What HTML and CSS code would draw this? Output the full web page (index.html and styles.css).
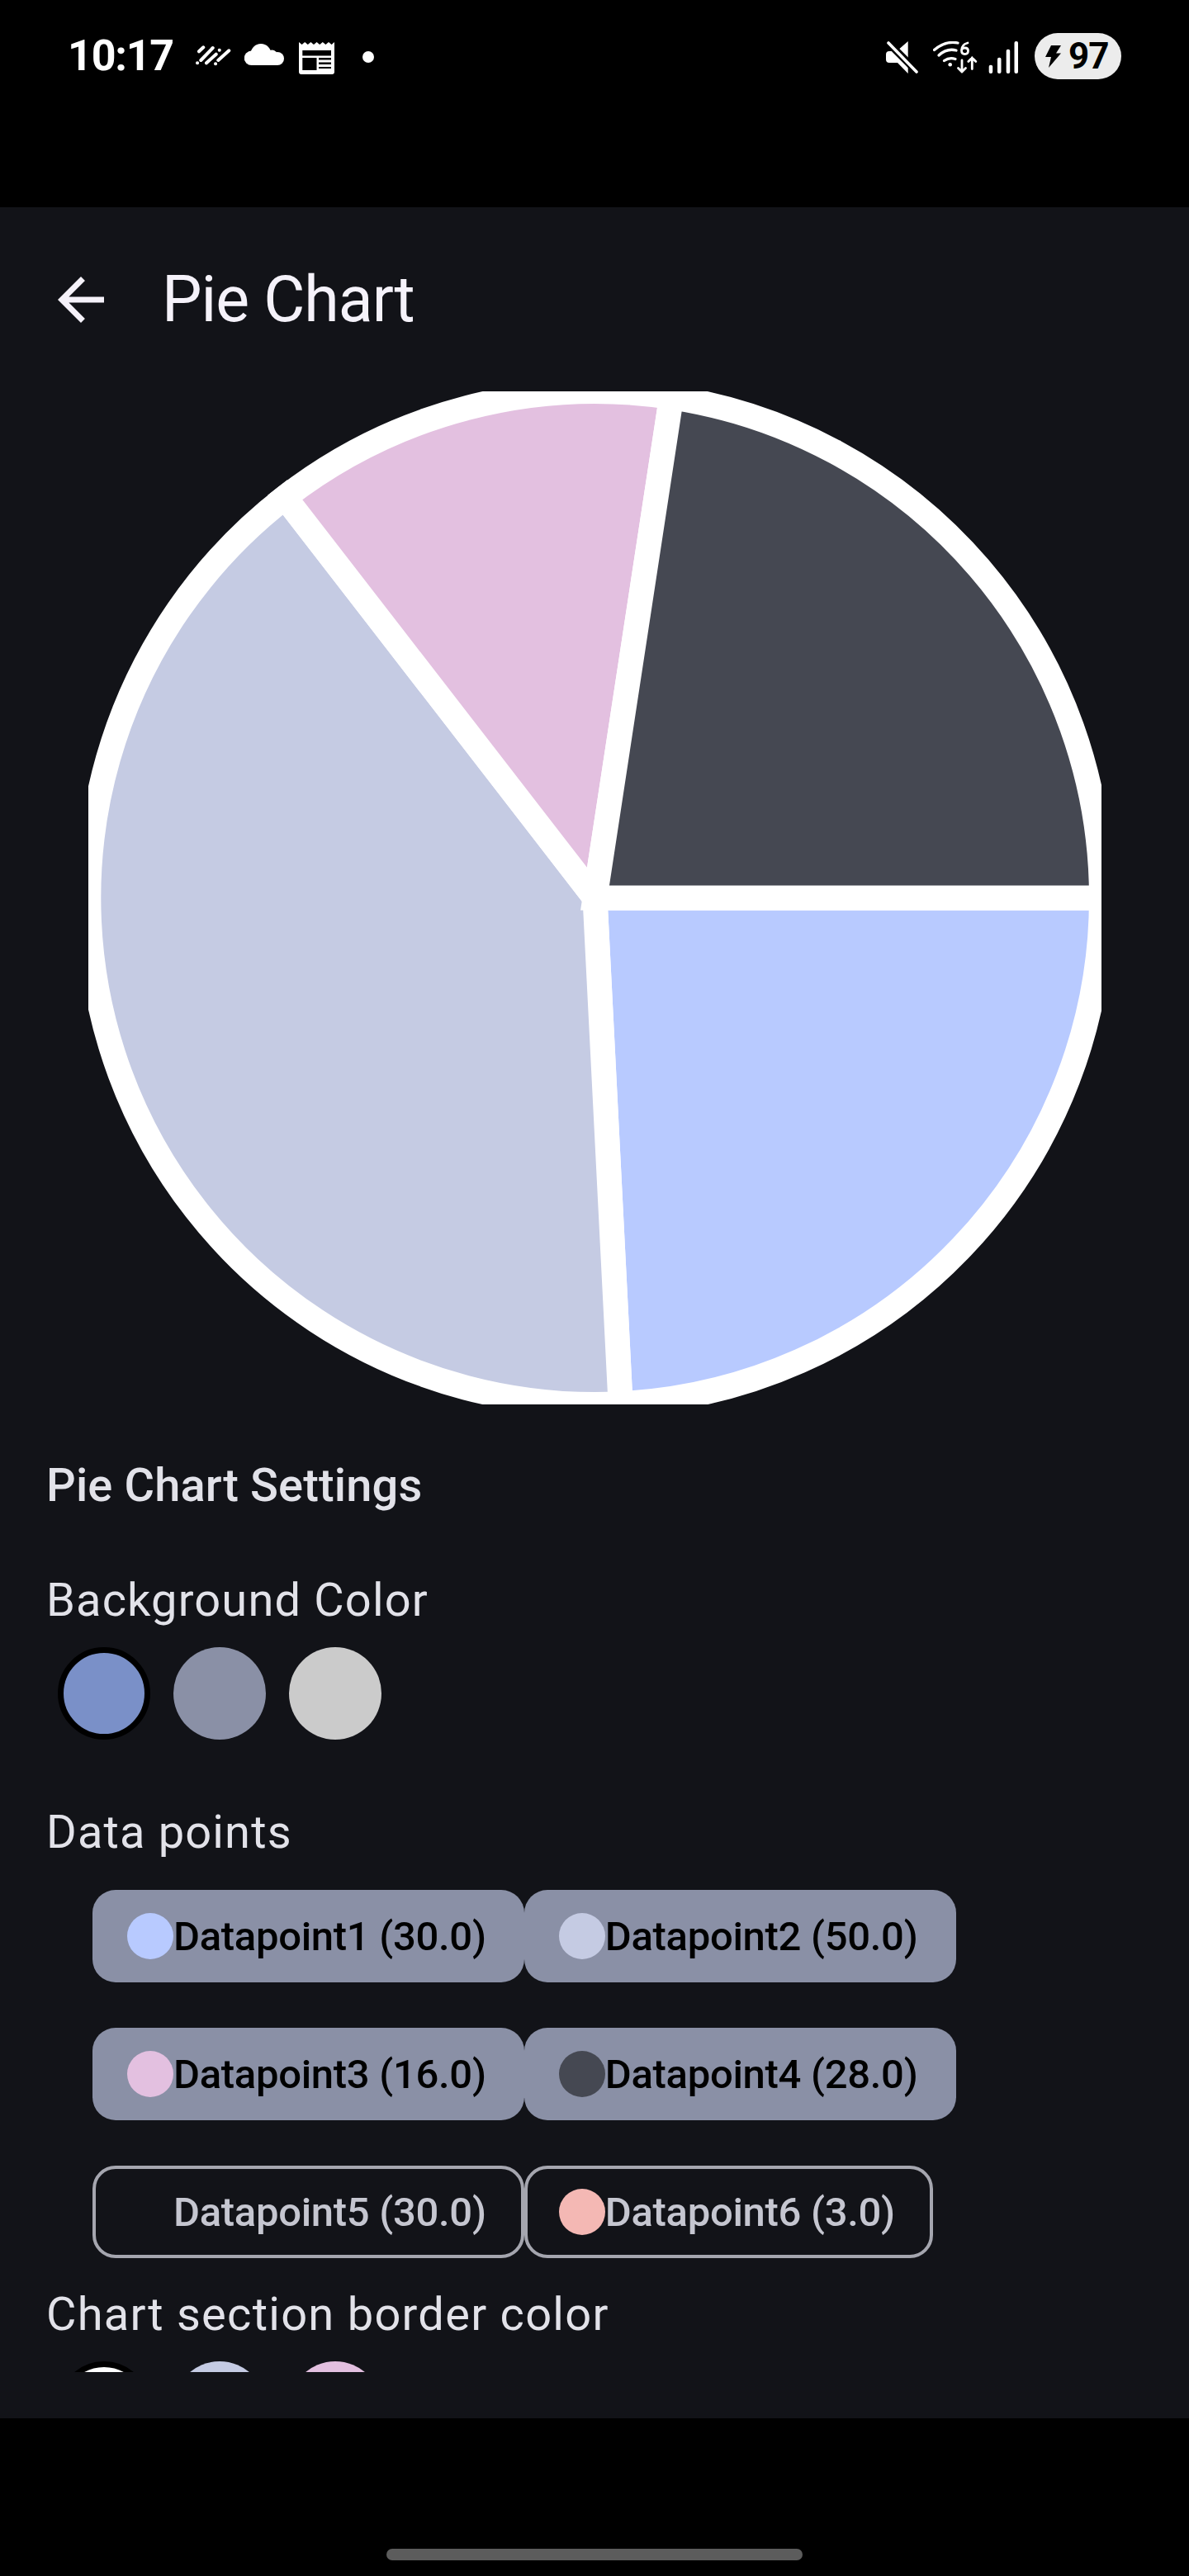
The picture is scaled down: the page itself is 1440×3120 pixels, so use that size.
FILE: index.html
```html
<!DOCTYPE html>
<html lang="en">
<head>
<meta charset="utf-8">
<title>Pie Chart</title>
<link rel="stylesheet" href="styles.css">
</head>
<body>
<div class="phone">
  <header class="status">
    <div class="status-left">
      <span class="time">10:17</span>
      <svg class="ic-rain" viewBox="0 0 46 28" fill="none" stroke="#fff" stroke-linecap="round" stroke-width="4">
        <path d="M6 8.300 11.300 3.300M8.300 19 22.700 4M4 22.300H4.100M15 22.300 26.700 11.700M30.700 6.700H30.800M26 23.300H26.100M29.300 19 42.300 7.300"/>
      </svg>
      <svg class="ic-cloud" viewBox="0 0 48 26" fill="#fff">
        <circle cx="8.500" cy="17.300" r="8.700"/>
        <circle cx="20" cy="12.500" r="12.500"/>
        <circle cx="33.500" cy="14" r="6.500"/>
        <circle cx="40" cy="18" r="8"/>
        <rect x="8" y="16" width="32" height="10"/>
      </svg>
      <svg class="ic-news" viewBox="0 0 43 39">
        <path fill="#fff" d="M0 0 3.600 3 7.200 0 10.800 3 14.400 0 18 3 21.600 0 25.200 3 28.800 0 32.400 3 36 0 39.600 3 43 0V36Q43 39 40 39H3Q0 39 0 36Z"/>
        <path fill="#000" d="M4.300 10H39V16.500H4.300ZM4.300 19H21.500V34H4.300ZM24 19H39V21.500H24ZM24 24.500H39V27H24ZM24 30H39V32H24Z"/>
      </svg>
      <span class="dot"></span>
    </div>
    <div class="status-right">
      <svg class="ic-mute" viewBox="0 0 39 39">
        <path fill="#fff" d="M26.700 0V39L14 26H4Q0 26 0 22V16Q0 12 4 12H13Z"/>
        <path stroke="#000" stroke-width="9" d="M0 -1 40 39"/>
        <path stroke="#fff" stroke-width="3.600" stroke-linecap="round" d="M3 2 37 37"/>
      </svg>
      <svg class="ic-wifi" viewBox="0 0 54 39" fill="none" stroke="#fff" stroke-linecap="round" stroke-width="3.300">
        <path d="M1.500 10.500Q15 -1 30 2"/>
        <path d="M7 17Q17 8 28 11"/>
        <path d="M13.500 23.500Q20 19 27 21.500"/>
        <circle cx="20.700" cy="28.300" r="2.300" fill="#fff" stroke="none"/>
        <path stroke-width="2.800" d="M42 2Q34.500 4 34.500 11 34.500 15.500 38.500 15.500 42.500 15.500 42.500 11.500 42.500 8 38.500 8 34.500 8 34.500 11"/>
        <path stroke-width="2.800" d="M35 23V37M30.500 32.500 35 37 39.500 32.500M47.300 33.500V20M42.800 24.500 47.300 20 51.800 24.500"/>
      </svg>
      <svg class="ic-signal" viewBox="0 0 36 39" fill="#fff">
        <rect x="0.700" y="28.700" width="4.500" height="10.300" rx="2"/>
        <rect x="11" y="19.700" width="4.500" height="19.300" rx="2"/>
        <rect x="21.700" y="9.700" width="4.500" height="29.300" rx="2"/>
        <rect x="31.500" y="0" width="4.500" height="39" rx="2"/>
      </svg>
      <div class="battery">
        <svg class="ic-bolt" viewBox="0 0 19 27"><path fill="#000" d="M7 0H19L13 9.500H19L4 27 7 14H0Z"/></svg>
        <span class="batt-num">97</span>
      </div>
    </div>
  </header>

  <main class="app">
    <div class="topbar">
      <svg class="back" viewBox="4 4 16 16"><path fill="#f5f2fa" d="M20 11H7.830l5.590-5.590L12 4l-8 8 8 8 1.410-1.410L7.830 13H20v-2z"/></svg>
      <h1 class="title">Pie Chart</h1>
    </div>
    <div class="scroll">
      <svg class="pie" viewBox="0 0 1227 1227" stroke="#fff" stroke-width="30">
        <path fill="#b8caff" d="M613.500 613.500H1227A613.500 613.500 0 0 1 644.570 1226.210Z"/>
        <path fill="#c5cbe3" d="M613.500 613.500L644.570 1226.210A613.500 613.500 0 0 1 238.200 128.400Z"/>
        <path fill="#e3c0e0" d="M613.500 613.500L238.200 128.400A613.500 613.500 0 0 1 706.100 7.100Z"/>
        <path fill="#454852" d="M613.500 613.500L706.100 7.100A613.500 613.500 0 0 1 1227 613.500Z"/>
      </svg>
      <section class="settings">
        <h2 class="heading">Pie Chart Settings</h2>
        <div class="label label-bg">Background Color</div>
        <div class="swatches">
          <span class="swatch swatch-selected sw-blue"></span>
          <span class="swatch sw-slate"></span>
          <span class="swatch sw-grey"></span>
        </div>
        <div class="label label-data">Data points</div>
        <div class="chips">
          <div class="chip chip-on"><span class="chip-dot c1"></span>Datapoint1 (30.0)</div>
          <div class="chip chip-on"><span class="chip-dot c2"></span>Datapoint2 (50.0)</div>
          <div class="chip chip-on"><span class="chip-dot c3"></span>Datapoint3 (16.0)</div>
          <div class="chip chip-on"><span class="chip-dot c4"></span>Datapoint4 (28.0)</div>
          <div class="chip chip-off"><span class="chip-dot c5"></span>Datapoint5 (30.0)</div>
          <div class="chip chip-off"><span class="chip-dot c6"></span>Datapoint6 (3.0)</div>
        </div>
        <div class="label label-border">Chart section border color</div>
        <div class="swatches">
          <span class="swatch swatch-selected sw-white"></span>
          <span class="swatch sw-lav"></span>
          <span class="swatch sw-pink"></span>
        </div>
      </section>
    </div>
  </main>

  <footer class="navbar"><span class="home"></span></footer>
</div>
</body>
</html>
```
FILE: styles.css
```css
* { box-sizing: border-box; margin: 0; padding: 0; }
html, body { background: #000; }
body { font-family: Roboto, "Noto Sans", sans-serif; }
.phone { width: 1440px; height: 3120px; display: flex; flex-direction: column; overflow: hidden; }

.status { height: 251px; flex: none; background: #000; display: flex; justify-content: space-between; align-items: flex-start; padding: 40px 82px 0 82px; }
.status-left { display: flex; align-items: center; height: 56px; }
.time { color: #fff; font-size: 52px; font-weight: 700; line-height: 56px; letter-spacing: -1.2px; width: 153px; }
.ic-rain { width: 46px; height: 28px; margin-top: 0; }
.ic-cloud { width: 48px; height: 26px; margin-left: 15px; margin-top: -4px; }
.ic-news { width: 43px; height: 39px; margin-left: 18px; margin-top: 5px; }
.dot { width: 14px; height: 14px; border-radius: 50%; background: #fff; margin-left: 34px; margin-top: 1px; }
.status-right { display: flex; align-items: center; height: 56px; }
.ic-mute { width: 39px; height: 39px; margin-top: 3px; }
.ic-wifi { width: 54px; height: 39px; margin-left: 18px; margin-top: 2px; }
.ic-signal { width: 36px; height: 39px; margin-left: 13px; margin-top: 2px; }
.battery { width: 105px; height: 56px; margin-left: 20px; border-radius: 28px; background: #ececec; display: flex; align-items: center; padding-left: 13px; }
.ic-bolt { width: 19px; height: 27px; }
.batt-num { color: #000; font-size: 44px; font-weight: 700; line-height: 56px; margin-left: 9px; letter-spacing: -1px; }

.app { height: 2678px; flex: none; background: #121318; }
.topbar { height: 223px; display: flex; align-items: center; padding-left: 70px; }
.back { width: 56px; height: 56px; flex: none; }
.title { margin-left: 70px; color: #f5f2fa; font-size: 77px; font-weight: 400; line-height: 100px; letter-spacing: -1px; }

.scroll { height: 2399px; overflow: hidden; }
.pie { display: block; width: 1227px; height: 1227px; margin-left: 107px; }
.settings { padding-left: 56px; color: #e2e2e9; }
.heading { margin-top: 56px; font-size: 56px; font-weight: 500; line-height: 84px; letter-spacing: 0.15px; }
.label { font-size: 56px; font-weight: 400; line-height: 84px; letter-spacing: 1.15px; }
.label-bg { margin-top: 55px; }
.label-data { margin-top: 70px; }
.label-border { margin-top: 26px; letter-spacing: 1.27px; }
.swatches { display: flex; gap: 28px; padding-left: 14px; margin-top: 15px; }
.swatch { width: 112px; height: 112px; border-radius: 50%; flex: none; }
.swatch-selected { border: 7px solid #000; }
.sw-blue { background: #7a90c8; }
.sw-slate { background: #8a90a6; }
.sw-grey { background: #cbcbcb; }
.sw-white { background: #fff; }
.sw-lav { background: #c5cbe3; }
.sw-pink { background: #e3c0e0; }

.chips { display: flex; flex-wrap: wrap; row-gap: 55px; width: 1100px; margin-left: 56px; margin-top: 28px; }
.chip { height: 112px; display: flex; align-items: center; border-radius: 28px; padding: 0 46px 0 42px; font-size: 49px; font-weight: 500; letter-spacing: -0.3px; white-space: nowrap; }
.chip-on { background: #8a90a6; color: #000; }
.chip-off { border: 4px solid #a5a6af; padding-left: 38px; padding-right: 42px; color: #c5c6d0; }
.chip-dot { width: 56px; height: 56px; border-radius: 50%; flex: none; }
.c1 { background: #b8caff; }
.c2 { background: #c5cbe3; }
.c3 { background: #e3c0e0; }
.c4 { background: #454852; }
.c5 { background: transparent; }
.c6 { background: #f4b8b4; }

.navbar { flex: 1; background: #000; display: flex; justify-content: center; padding-top: 158px; }
.home { width: 504px; height: 14px; border-radius: 7px; background: #5c5c5c; }
```
